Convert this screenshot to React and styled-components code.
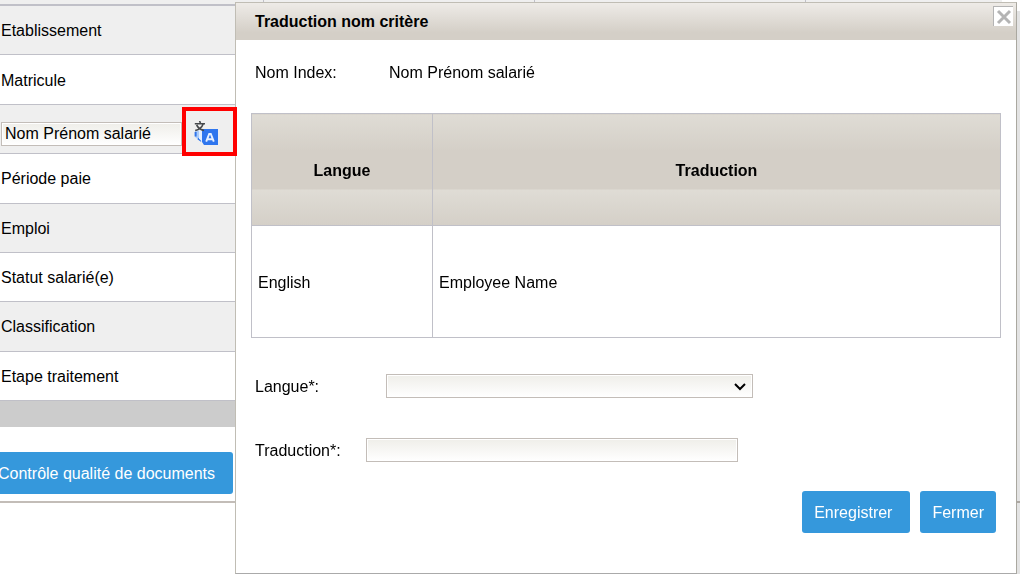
import { useState } from "react";
import styled, { createGlobalStyle, css } from "styled-components";

const CRITERIA = [
  { id: "etablissement", name: "Etablissement" },
  { id: "matricule", name: "Matricule" },
  { id: "nom", name: "Nom Prénom salarié", editing: true },
  { id: "periode", name: "Période paie" },
  { id: "emploi", name: "Emploi" },
  { id: "statut", name: "Statut salarié(e)" },
  { id: "classification", name: "Classification" },
  { id: "etape", name: "Etape traitement" },
];

const TRANSLATIONS = [{ lang: "English", value: "Employee Name" }];

const TranslateIcon = () => (
  <svg width="24" height="24" viewBox="0 0 24 24" aria-hidden="true">
    <path d="M1 9.5 L4 9.5 L6.5 12 L8 20 L6 20 L1 16 Z" fill="#a9cbfb" />
    <path d="M1.6 11 V15.5 M4 17.5 L7.5 20" stroke="#2f74ea" strokeWidth="2" fill="none" />
    <path d="M8 8 H24 V24 H10 L8 21 Z" fill="#2f76ee" />
    <path d="M5 9.5 H8 V21 L5 17.5 Z" fill="#e3efff" />
    <path
      d="M12.2 20.6 L15.2 13 H16.8 L19.8 20.6 M13.4 18.2 H18.6"
      stroke="#e8f1ff"
      strokeWidth="1.9"
      fill="none"
    />
    <path
      d="M5.6 0 L6.4 2 M0.8 2.8 H11 M2.6 4 C4.2 7 6.6 8.6 10 9.6 M9 3.2 C8 6.2 5.4 8.4 1.2 9.6"
      stroke="#45484b"
      strokeWidth="1.6"
      fill="none"
    />
  </svg>
);

export default function App() {
  const [criterion, setCriterion] = useState("Nom Prénom salarié");
  const [lang, setLang] = useState("");
  const [translation, setTranslation] = useState("");
  const [open, setOpen] = useState(true);

  return (
    <>
      <GlobalStyle />
      <Page>
        <CriteriaTable>
          <colgroup>
            <col width="264" />
            <col width="271" />
            <col width="271" />
            <col />
          </colgroup>
          <thead>
            <tr>
              <HeadStrip />
              <HeadStrip />
              <HeadStrip />
              <HeadStrip />
            </tr>
          </thead>
          <tbody>
            {CRITERIA.map((item) => (
              <CriteriaRow key={item.id}>
                <td colSpan={4}>
                  {item.editing ? (
                    <EditCell>
                      <NameInput
                        aria-label="Nom critère"
                        value={criterion}
                        onChange={(e) => setCriterion(e.target.value)}
                      />
                      <TranslateButton type="button" aria-label="Traduire" onClick={() => setOpen(true)}>
                        <TranslateIcon />
                      </TranslateButton>
                    </EditCell>
                  ) : (
                    item.name
                  )}
                </td>
              </CriteriaRow>
            ))}
          </tbody>
        </CriteriaTable>
        <TableFooter />
        <Actions>
          <QualityButton type="button">Contrôle qualité de documents</QualityButton>
        </Actions>
      </Page>

      {open && (
        <Dialog role="dialog" aria-labelledby="dialog-title">
          <DialogHeader>
            <DialogTitle id="dialog-title">Traduction nom critère</DialogTitle>
            <CloseButton type="button" aria-label="Fermer la fenêtre" onClick={() => setOpen(false)}>
              <svg width="18" height="18" viewBox="0 0 18 18" aria-hidden="true">
                <path d="M3 3 L15 15 M15 3 L3 15" stroke="#b4b4b4" strokeWidth="3" />
              </svg>
            </CloseButton>
          </DialogHeader>

          <DialogBody>
            <IndexLine>
              <span>Nom Index:</span>
              <span>Nom Prénom salarié</span>
            </IndexLine>

            <TranslationTable>
              <colgroup>
                <col width="181" />
                <col />
              </colgroup>
              <thead>
                <tr>
                  <th scope="col">Langue</th>
                  <th scope="col">Traduction</th>
                </tr>
              </thead>
              <tbody>
                {TRANSLATIONS.map((row) => (
                  <tr key={row.lang}>
                    <td>{row.lang}</td>
                    <td>{row.value}</td>
                  </tr>
                ))}
              </tbody>
            </TranslationTable>

            <Field $labelWidth={131}>
              <label htmlFor="langue">Langue*:</label>
              <SelectBox>
                <LangSelect id="langue" value={lang} onChange={(e) => setLang(e.target.value)}>
                  <option value=""></option>
                  <option value="en">English</option>
                </LangSelect>
                <svg width="12" height="8" viewBox="0 0 12 8" aria-hidden="true">
                  <path d="M1 1 L6 6 L11 1" stroke="#000" strokeWidth="2" fill="none" />
                </svg>
              </SelectBox>
            </Field>

            <Field $labelWidth={111}>
              <label htmlFor="traduction">Traduction*:</label>
              <TextInput
                id="traduction"
                value={translation}
                onChange={(e) => setTranslation(e.target.value)}
              />
            </Field>

            <DialogActions>
              <SaveButton type="button">Enregistrer</SaveButton>
              <Button type="button" onClick={() => setOpen(false)}>Fermer</Button>
            </DialogActions>
          </DialogBody>
        </Dialog>
      )}
    </>
  );
}

const GlobalStyle = createGlobalStyle`
  * {
    box-sizing: border-box;
  }

  body {
    margin: 0;
    background: #fff;
    color: #000;
    font: 16px/20px "Liberation Sans", Arial, sans-serif;
    overflow: hidden;
  }

  button,
  input,
  select {
    font: inherit;
    color: inherit;
  }
`;

const Page = styled.main`
  display: flex;
  flex-direction: column;
`;

const CriteriaTable = styled.table`
  width: calc(100% - 18px);
  height: 401px;
  table-layout: fixed;
  border-collapse: separate;
  border-spacing: 0;
`;

const HeadStrip = styled.td`
  height: 6px;
  padding: 0;
  background: #efefef;
  border-right: 1px solid #c0c0c8;
  border-bottom: 2px solid #c0c0c8;

  &:last-child {
    border-right: none;
  }
`;

const CriteriaRow = styled.tr`
  background: #fff;

  &:nth-child(odd) {
    background: #efefef;
  }

  td {
    height: 49px;
    padding: 2px 1px 0;
    border-bottom: 1px solid #c0c0c8;
    vertical-align: middle;
  }
`;

const EditCell = styled.div`
  display: flex;
  align-items: center;
  height: 44px;
  padding-top: 4px;
`;

const field = css`
  height: 24px;
  border: 1px solid #c3bdb8;
  border-radius: 0;
  background: linear-gradient(#efeee9, #fff) padding-box;
  box-shadow: inset 0 0 0 1px #fff;
  outline: none;
`;

const NameInput = styled.input`
  ${field}
  width: 181px;
  margin-top: 4px;
  padding: 1px 3px 0;
`;

const TranslateButton = styled.button`
  display: flex;
  flex-shrink: 0;
  align-items: center;
  justify-content: center;
  width: 55px;
  height: 49px;
  padding: 2px 7px 0 0;
  border: 4px solid #f00;
  background: #efefef;
  position: relative;
  z-index: 2;
  cursor: pointer;
`;

const TableFooter = styled.div`
  width: calc(100% - 18px);
  height: 26px;
  background: #ccc;
`;

const Actions = styled.div`
  padding: 25px 0 7px;
  border-bottom: 2px solid #c3bdb8;
`;

const Button = styled.button`
  height: 42px;
  padding: 2px 12px 0;
  border: none;
  border-radius: 3px;
  background: #3598dc;
  color: #fff;
  cursor: pointer;
`;

const QualityButton = styled(Button)`
  margin-left: -14px;
  padding-right: 18px;
`;

const SaveButton = styled(Button)`
  padding-right: 18px;
`;

const Dialog = styled.section`
  position: fixed;
  z-index: 1;
  top: 2px;
  right: 3px;
  bottom: 0;
  left: 235px;
  border: 1px solid #c0bdb4;
  border-right-color: #aaa8a0;
  border-bottom-color: #aaa;
  background: #fff;
  box-shadow: 8px 9px 0 rgba(0, 0, 0, 0.11);
`;

const DialogHeader = styled.header`
  display: flex;
  justify-content: space-between;
  align-items: center;
  height: 37px;
  padding: 0 3px 0 19px;
  background: linear-gradient(#eeebe7, #d4cfc7 80%);
`;

const DialogTitle = styled.h1`
  margin: 0;
  font-size: 16px;
`;

const CloseButton = styled.button`
  display: flex;
  align-self: flex-start;
  width: 20px;
  height: 20px;
  margin-top: 3px;
  padding: 0;
  border: solid #b4b4b4;
  border-width: 1px 0 0 1px;
  background: #fff;
  cursor: pointer;

  svg {
    margin: auto;
  }
`;

const DialogBody = styled.div`
  padding: 23px 15px 0;
`;

const IndexLine = styled.div`
  display: grid;
  grid-template-columns: 134px 1fr;
  padding-left: 4px;
  margin-bottom: 30px;
`;

const TranslationTable = styled.table`
  width: 100%;
  table-layout: fixed;
  border-collapse: collapse;
  margin-bottom: 36px;

  th,
  td {
    height: 112px;
    padding: 2px 6px 0;
    border: 1px solid #c0c0c8;
    text-align: left;
  }

  th {
    text-align: center;
    background: linear-gradient(#dfdcd5, #d4cfc7 36px) 0 0 / 100% 75px repeat-y;
  }
`;

const Field = styled.div`
  display: grid;
  grid-template-columns: ${(p) => p.$labelWidth}px 1fr;
  align-items: center;
  padding-left: 4px;
  margin-bottom: 40px;

  label {
    padding-top: 2px;
  }
`;

const SelectBox = styled.div`
  position: relative;
  width: 367px;

  svg {
    position: absolute;
    top: 9px;
    right: 7px;
    pointer-events: none;
  }
`;

const LangSelect = styled.select`
  ${field}
  display: block;
  width: 100%;
  appearance: none;
`;

const TextInput = styled.input`
  ${field}
  width: 372px;
`;

const DialogActions = styled.div`
  display: flex;
  justify-content: flex-end;
  gap: 10px;
  margin-top: -11px;
  padding-right: 5px;
`;
